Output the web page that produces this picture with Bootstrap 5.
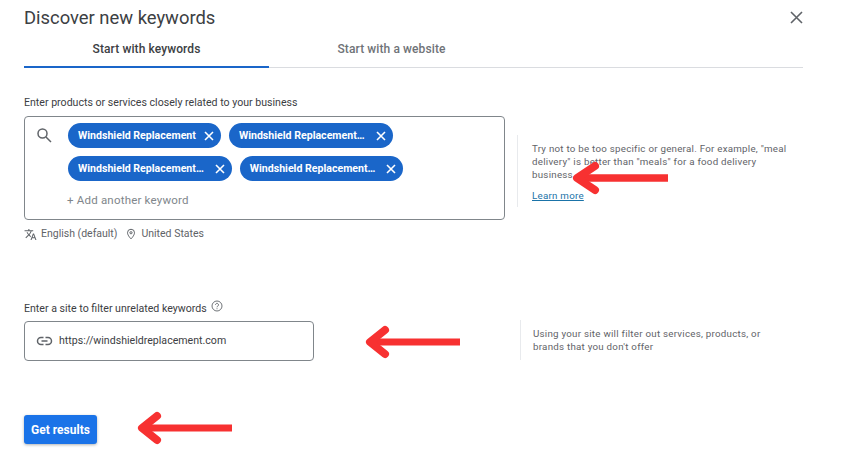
<!DOCTYPE html>
<html lang="en">
<head>
  <meta charset="UTF-8" />
  <meta name="viewport" content="width=device-width, initial-scale=1" />
  <title>Discover new keywords</title>
  <link href="https://cdn.jsdelivr.net/npm/bootstrap@5.3.3/dist/css/bootstrap.min.css" rel="stylesheet" />
  <style>
    body {
      background: #fff;
      font-family: Roboto, "Liberation Sans", sans-serif;
      color: #3c4043;
      overflow: hidden;
    }

    .page-wrap {
      position: relative;
      width: 855px;
      height: 459px;
      padding: 6px 52px 0 24px;
    }

    .page-title {
      font-size: 18.4px;
      line-height: 24px;
      font-weight: 400;
      color: #3c4043;
      margin: 0;
    }

    .close-x {
      position: absolute;
      left: 790px;
      top: 11px;
    }

    .tab-row {
      margin-top: 7px;
      height: 31px;
      border-bottom: 1px solid #dadce0;
    }

    .tab-item {
      width: 245px;
      height: 31px;
      padding-top: 4px;
      font-size: 12px;
      line-height: 16px;
      font-weight: 500;
      text-align: center;
      color: #6f7378;
      letter-spacing: .1px;
    }

    .tab-item.is-active {
      color: #3c4043;
      border-bottom: 2px solid #1a66c9;
    }

    .field-label {
      font-size: 10.6px;
      line-height: 14px;
      color: #3c4043;
    }

    .kw-section {
      margin-top: 28px;
    }

    .kw-row {
      margin-top: 6px;
    }

    .kw-box {
      width: 481px;
      height: 104px;
      border: 1px solid #80868b;
      border-radius: 4px;
      padding: 6px 0 0 11px;
    }

    .kw-chips {
      margin-left: 16px;
    }

    .kw-chip {
      height: 25px;
      border-radius: 13px;
      background: #1a66c9;
      color: #fff;
      font-size: 10.6px;
      font-weight: 700;
      padding: 0 7px 0 10px;
      gap: 8px;
    }

    .kw-chip.is-cut {
      gap: 11px;
    }

    .chip-row {
      gap: 8px;
      margin-bottom: 8px;
    }

    .add-kw {
      font-size: 11.5px;
      line-height: 14px;
      color: #80868b;
      margin: 12px 0 0 -1px;
      letter-spacing: .2px;
    }

    .hint-text {
      font-size: 9.75px;
      line-height: 13px;
      color: #5f6368;
      border-left: 1px solid #e8eaed;
      letter-spacing: .25px;
    }

    .hint-one {
      width: 272px;
      margin: 19px 0 0 12px;
      padding: 7px 0 0 14px;
      height: 72px;
    }

    .hint-one a {
      display: block;
      margin-top: 8px;
      color: #1a73a8;
    }

    .hint-two {
      width: 258px;
      height: 40px;
      margin: -1px 0 0 206px;
      padding: 7px 0 0 12px;
    }

    .locale-row {
      margin-top: 7px;
      font-size: 10.5px;
      line-height: 14px;
      color: #5f6368;
    }

    .site-section {
      margin-top: 59px;
    }

    .site-label {
      line-height: 15px;
    }

    .site-row {
      margin-top: 5px;
    }

    .site-box {
      width: 290px;
      height: 40px;
      border: 1px solid #80868b;
      border-radius: 4px;
      padding-left: 11px;
      font-size: 10.6px;
      color: #3c4043;
      flex-shrink: 0;
    }

    .site-box svg {
      margin-right: -2px;
    }

    .get-btn {
      margin-top: 54px;
      width: 73px;
      height: 29px;
      padding: 0;
      font-size: 12px;
      font-weight: 700;
      background: #1a73e8;
      border: 0;
      border-radius: 3px;
      box-shadow: 0 1px 3px rgba(60, 64, 67, .4);
    }

    .red-arrow {
      position: absolute;
    }
  </style>
</head>
<body>

  <div class="page-wrap">
    <h1 class="page-title">Discover new keywords</h1>
    <svg class="close-x" width="13" height="13" viewBox="0 0 13 13" fill="none" stroke="#5f6368" stroke-width="1.6">
      <path d="M1 1l11 11M12 1L1 12" />
    </svg>

    <!-- Tabs -->
    <div class="tab-row d-flex">
      <div class="tab-item is-active">Start with keywords</div>
      <div class="tab-item">Start with a website</div>
    </div>

    <!-- Keywords -->
    <div class="kw-section">
      <div class="field-label">Enter products or services closely related to your business</div>
      <div class="kw-row d-flex align-items-start">
        <div class="kw-box d-flex">
          <svg class="mt-1" width="16" height="16" viewBox="0 0 16 16" fill="none" stroke="#5f6368" stroke-width="1.5">
            <circle cx="6.5" cy="6.5" r="4.5" />
            <path d="M10 10l5 5" />
          </svg>
          <div class="kw-chips">
            <div class="chip-row d-flex">
              <span class="kw-chip d-inline-flex align-items-center">Windshield Replacement
                <svg width="10" height="10" viewBox="0 0 10 10" fill="none" stroke="#fff" stroke-width="1.6"><path d="M1 1l8 8M9 1L1 9" /></svg>
              </span>
              <span class="kw-chip is-cut d-inline-flex align-items-center">Windshield Replacement…
                <svg width="10" height="10" viewBox="0 0 10 10" fill="none" stroke="#fff" stroke-width="1.6"><path d="M1 1l8 8M9 1L1 9" /></svg>
              </span>
            </div>
            <div class="chip-row d-flex">
              <span class="kw-chip is-cut d-inline-flex align-items-center">Windshield Replacement…
                <svg width="10" height="10" viewBox="0 0 10 10" fill="none" stroke="#fff" stroke-width="1.6"><path d="M1 1l8 8M9 1L1 9" /></svg>
              </span>
              <span class="kw-chip is-cut d-inline-flex align-items-center">Windshield Replacement…
                <svg width="10" height="10" viewBox="0 0 10 10" fill="none" stroke="#fff" stroke-width="1.6"><path d="M1 1l8 8M9 1L1 9" /></svg>
              </span>
            </div>
            <div class="add-kw">+ Add another keyword</div>
          </div>
        </div>
        <div class="hint-text hint-one">
          Try not to be too specific or general. For example, "meal delivery" is better than "meals" for a food delivery business
          <a href="#">Learn more</a>
        </div>
      </div>
      <div class="locale-row d-flex align-items-center">
        <svg width="13" height="13" viewBox="0 0 24 24" fill="#5f6368" class="me-1">
          <path d="M12.87 15.07l-2.54-2.51.03-.03c1.74-1.94 2.98-4.17 3.71-6.53H17V4h-7V2H8v2H1v2h11.17C11.5 7.92 10.44 9.75 9 11.35 8.07 10.32 7.3 9.19 6.69 8h-2c.73 1.63 1.73 3.17 2.98 4.56l-5.09 5.02L4 19l5-5 3.11 3.11.76-2.04zM18.5 10h-2L12 22h2l1.12-3h4.75L21 22h2l-4.500-12zm-2.620 7l1.620-4.330L19.120 17h-3.240z" />
        </svg>
        <span>English (default)</span>
        <svg width="12" height="12" viewBox="0 0 24 24" fill="none" stroke="#5f6368" stroke-width="2" class="ms-2 me-1">
          <path d="M12 22s-7-7.500-7-12.500a7 7 0 0 1 14 0C19 14.500 12 22 12 22z" />
          <circle cx="12" cy="9.500" r="2.200" />
        </svg>
        <span>United States</span>
      </div>
    </div>

    <!-- Site filter -->
    <div class="site-section">
      <div class="field-label site-label d-flex align-items-center">
        Enter a site to filter unrelated keywords
        <svg class="ms-1 mb-1" width="12" height="12" viewBox="0 0 12 12" fill="none" stroke="#5f6368" stroke-width=".9">
          <circle cx="6" cy="6" r="5" />
          <path d="M4.500 4.800a1.500 1.500 0 1 1 2.300 1.300c-.6.4-.8.6-.8 1.200M6 8.300v.9" />
        </svg>
      </div>
      <div class="site-row d-flex align-items-start">
        <div class="site-box d-flex align-items-center gap-2">
          <svg width="17" height="10" viewBox="0 0 16 10" fill="none" stroke="#5f6368" stroke-width="1.500">
            <path d="M7 1.500H4.500a3.500 3.500 0 0 0 0 7H7M9 1.500h2.500a3.500 3.500 0 0 1 0 7H9M5 5h6" />
          </svg>
          <span>https://windshieldreplacement.com</span>
        </div>
        <div class="hint-text hint-two">Using your site will filter out services, products, or brands that you don't offer</div>
      </div>
    </div>

    <button type="button" class="btn btn-primary get-btn d-block">Get results</button>

    <!-- Annotation arrows -->
    <svg class="red-arrow" style="left:572px;top:160px" width="100" height="36" viewBox="0 0 100 36" fill="none" stroke="#f73131" stroke-linecap="round" stroke-linejoin="round">
      <path d="M6 18h90" stroke-width="7.500" stroke-linecap="butt" />
      <path d="M23 6L5 18l18 12" stroke-width="8" />
    </svg>
    <svg class="red-arrow" style="left:362px;top:324px" width="100" height="36" viewBox="0 0 100 36" fill="none" stroke="#f73131" stroke-linecap="round" stroke-linejoin="round">
      <path d="M8 18h90" stroke-width="7" stroke-linecap="butt" />
      <path d="M23 6L8 18l15 12" stroke-width="8" />
    </svg>
    <svg class="red-arrow" style="left:134px;top:410px" width="100" height="36" viewBox="0 0 100 36" fill="none" stroke="#f73131" stroke-linecap="round" stroke-linejoin="round">
      <path d="M8 18h90" stroke-width="7" stroke-linecap="butt" />
      <path d="M23 6L8 18l15 12" stroke-width="8" />
    </svg>
  </div>

</body>
</html>
